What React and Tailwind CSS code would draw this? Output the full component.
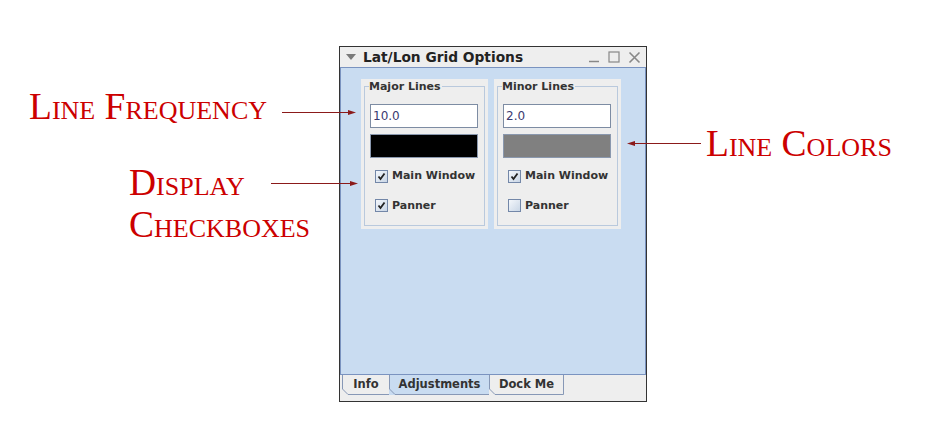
import React from 'react';

const ui = { fontFamily: '"DejaVu Sans", Verdana, sans-serif' };
const serif = { fontFamily: '"Liberation Serif", "Times New Roman", serif', fontVariant: 'small-caps' };

const Check = ({ checked }) => (
  <div className="w-[13px] h-[13px] border border-[#7387a8] bg-gradient-to-br from-[#f4f7fb] to-[#c9d6e6] flex items-center justify-center">
    {checked && (
      <svg width="9" height="9" viewBox="0 0 9 9">
        <path d="M1.5 4.5 L3.5 7 L7.5 1.5" stroke="#222" strokeWidth="1.8" fill="none" />
      </svg>
    )}
  </div>
);

const LinesPanel = ({ title, value, color, panner }) => (
  <div className="w-[127px] h-[150px] bg-[#eeeeee] px-[3px] pb-[3px] pt-0">
    <fieldset className="h-full border border-[#b9c9dd] pl-[5px] pr-0 pb-0 pt-[10px]">
      <legend className="text-[11px] font-bold text-[#333] leading-[15px] px-0 -ml-[1px] pr-[1px]">{title}</legend>
      <div className="w-[108px] h-[24px] bg-white border border-[#7d8ca3] text-[12px] leading-[22px] pl-[2px] text-[#3a3a70]">
        {value}
      </div>
      <div className="w-[108px] h-[24px] mt-[6px] border border-[#8a98ae]" style={{ background: color }} />
      <div className="mt-[10px] pl-[5px] flex flex-col gap-[13px] text-[11px] font-bold text-[#333]">
        <div className="flex items-center gap-[4px]">
          <Check checked />
          <span>Main Window</span>
        </div>
        <div className="flex items-center gap-[4px]">
          <Check checked={panner} />
          <span>Panner</span>
        </div>
      </div>
    </fieldset>
  </div>
);

const Arrow = ({ className, w, left }) => (
  <svg className={className} width={w} height="7" viewBox={`0 0 ${w} 7`}>
    {left ? (
      <>
        <line x1="6" y1="3.5" x2={w} y2="3.5" stroke="#8b1a1a" strokeWidth="1" />
        <path d="M0 3.5 L8 1 L8 6 Z" fill="#8b1a1a" />
      </>
    ) : (
      <>
        <line x1="0" y1="3.5" x2={w - 6} y2="3.5" stroke="#8b1a1a" strokeWidth="1" />
        <path d={`M${w} 3.5 L${w - 8} 1 L${w - 8} 6 Z`} fill="#8b1a1a" />
      </>
    )}
  </svg>
);

const Tab = ({ label, w, selected }) => (
  <div
    className={`relative h-[20px] flex items-center justify-center -ml-[1px] ${selected ? 'bg-[#c9dcf1]' : 'bg-[#eeeeee]'}`}
    style={{ width: w }}
  >
    <svg className="absolute left-0 top-0" width={w} height="20" viewBox={`0 0 ${w} 20`}>
      <path d={`M0.5 0 L0.5 14 L6 19.5 L${w - 0.5} 19.5 L${w - 0.5} 0`} stroke="#8798b6" fill="none" />
    </svg>
    <span className="relative">{label}</span>
  </div>
);

export default function App() {
  return (
    <div className="relative w-[936px] h-[432px] bg-white overflow-hidden" style={ui}>
      {/* window */}
      <div className="absolute left-[339px] top-[46px] w-[308px] h-[356px] border border-[#333] bg-[#eeeeee] flex flex-col">
        <div className="h-[20px] flex items-center pl-[6px] pr-[5px] bg-[#eeeeee]">
          <svg width="10" height="7" viewBox="0 0 10 7"><path d="M0 0 L10 0 L5 6 Z" fill="#7a7a7a" /></svg>
          <span className="ml-[7px] text-[13.75px] font-bold text-[#222]">Lat/Lon Grid Options</span>
          <div className="ml-auto flex items-center gap-[8px]">
            <svg width="12" height="12" viewBox="0 0 12 12"><line x1="1" y1="10.5" x2="11" y2="10.5" stroke="#888" strokeWidth="1.5" /></svg>
            <svg width="12" height="12" viewBox="0 0 12 12"><rect x="1" y="1" width="10" height="10" stroke="#888" strokeWidth="1.2" fill="none" /></svg>
            <svg width="13" height="13" viewBox="0 0 13 13"><path d="M1.5 1.5 L11.5 11.5 M11.5 1.5 L1.5 11.5" stroke="#888" strokeWidth="1.6" /></svg>
          </div>
        </div>
        <div className="flex-1 bg-[#c9dcf1] border border-[#7a93c0] pl-[20px] pt-[11px]">
          <div className="flex gap-[6px]">
            <LinesPanel title="Major Lines" value="10.0" color="#000000" panner />
            <LinesPanel title="Minor Lines" value="2.0" color="#808080" panner={false} />
          </div>
        </div>
        <div className="h-[26px] flex items-start pl-[3px] text-[11.5px] font-bold text-[#333]">
          <Tab label="Info" w={48} />
          <Tab label="Adjustments" w={101} selected />
          <Tab label="Dock Me" w={75} />
        </div>
      </div>

      {/* annotations */}
      <div className="absolute left-[29px] top-[86px] text-[37.5px] leading-[42px] text-[#cc0000]" style={serif}>Line Frequency</div>
      <Arrow className="absolute left-[282px] top-[109px]" w={74} />

      <div className="absolute left-[129px] top-[162px] text-[37.5px] leading-[42px] text-[#cc0000]" style={serif}>
        <div>Display</div>
        <div>Checkboxes</div>
      </div>
      <Arrow className="absolute left-[271px] top-[180px]" w={87} />

      <div className="absolute left-[706px] top-[123px] text-[37.5px] leading-[42px] text-[#cc0000]" style={serif}>Line Colors</div>
      <Arrow className="absolute left-[627px] top-[140px]" w={74} left />
    </div>
  );
}
